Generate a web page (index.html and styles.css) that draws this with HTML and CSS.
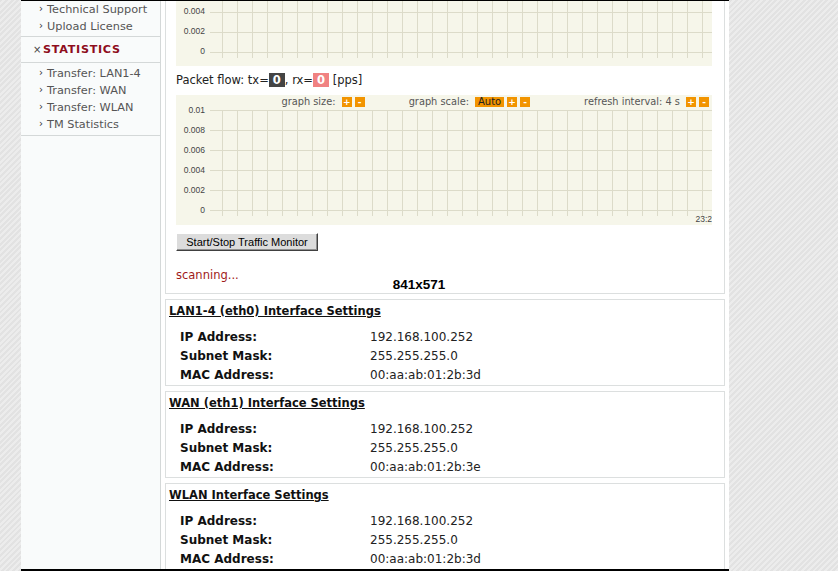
FILE: index.html
```html
<!DOCTYPE html>
<html lang="en">
<head>
    <meta charset="UTF-8">
    <title>Status - Traffic Monitor</title>
    <link rel="stylesheet" href="styles.css">
</head>
<body>

<div class="page">
    <!-- Left menu -->
    <div class="sidebar">
        <ul class="menu menu-top">
            <li>Technical Support</li>
            <li>Upload License</li>
        </ul>
        <div class="menu-head">STATISTICS</div>
        <ul class="menu">
            <li>Transfer: LAN1-4</li>
            <li>Transfer: WAN</li>
            <li>Transfer: WLAN</li>
            <li>TM Statistics</li>
        </ul>
    </div>

    <div class="content">
        <!-- Traffic monitor -->
        <div class="box monitor">
            <div class="graph graph-cut">
                <svg width="536" height="65" viewBox="0 64 536 65">
                    <defs>
                        <pattern id="cols1" x="46" y="0" width="15" height="130" patternUnits="userSpaceOnUse">
                            <path d="M0.5 0V130" stroke="#dcdbc9"/>
                        </pattern>
                    </defs>
                    <rect x="46" y="15" width="481" height="106" fill="url(#cols1)"/>
                    <path d="M34 15.5H536M34 35.5H536M34 55.5H536M34 75.5H536M34 95.5H536M34 115.5H536" stroke="#dcdbc9"/>
                    <g class="axis">
                        <text x="29" y="77">0.004</text>
                        <text x="29" y="97">0.002</text>
                        <text x="29" y="117">0</text>
                    </g>
                </svg>
            </div>

            <p class="flow">Packet flow: tx=<span class="val tx">0</span>, rx=<span class="val rx">0</span> [pps]</p>

            <div class="graph">
                <div class="graph-bar">
                    <span class="ctl">graph size: <b class="btn">+</b><b class="btn">-</b></span>
                    <span class="ctl ctl-scale">graph scale: <b class="btn btn-wide">Auto</b><b class="btn">+</b><b class="btn">-</b></span>
                    <span class="ctl ctl-refresh">refresh interval: 4 s <b class="btn">+</b><b class="btn">-</b></span>
                </div>
                <svg width="536" height="130">
                    <defs>
                        <pattern id="cols2" x="46" y="0" width="15" height="130" patternUnits="userSpaceOnUse">
                            <path d="M0.5 0V130" stroke="#dcdbc9"/>
                        </pattern>
                    </defs>
                    <rect x="46" y="15" width="481" height="106" fill="url(#cols2)"/>
                    <path d="M34 15.5H536M34 35.5H536M34 55.5H536M34 75.5H536M34 95.5H536M34 115.5H536" stroke="#dcdbc9"/>
                    <g class="axis">
                        <text x="29" y="18">0.01</text>
                        <text x="29" y="38">0.008</text>
                        <text x="29" y="58">0.006</text>
                        <text x="29" y="78">0.004</text>
                        <text x="29" y="98">0.002</text>
                        <text x="29" y="118">0</text>
                        <text x="536" y="127">23:2</text>
                    </g>
                </svg>
            </div>

            <button class="btn-monitor">Start/Stop Traffic Monitor</button>

            <div class="status">
                <span class="scan">scanning...</span>
                <span class="dims">841x571</span>
            </div>
        </div>

        <!-- Interfaces -->
        <div class="box">
            <h3>LAN1-4 (eth0) Interface Settings</h3>
            <dl class="info">
                <dt>IP Address:</dt><dd>192.168.100.252</dd>
                <dt>Subnet Mask:</dt><dd>255.255.255.0</dd>
                <dt>MAC Address:</dt><dd>00:aa:ab:01:2b:3d</dd>
            </dl>
        </div>

        <div class="box">
            <h3>WAN (eth1) Interface Settings</h3>
            <dl class="info">
                <dt>IP Address:</dt><dd>192.168.100.252</dd>
                <dt>Subnet Mask:</dt><dd>255.255.255.0</dd>
                <dt>MAC Address:</dt><dd>00:aa:ab:01:2b:3e</dd>
            </dl>
        </div>

        <div class="box">
            <h3>WLAN Interface Settings</h3>
            <dl class="info">
                <dt>IP Address:</dt><dd>192.168.100.252</dd>
                <dt>Subnet Mask:</dt><dd>255.255.255.0</dd>
                <dt>MAC Address:</dt><dd>00:aa:ab:01:2b:3d</dd>
            </dl>
        </div>
    </div>
</div>

</body>
</html>
```

FILE: styles.css
```css
* {
    margin: 0;
    padding: 0;
    box-sizing: border-box;
}

body {
    font-family: "DejaVu Sans", Verdana, sans-serif;
    font-size: 11.5px;
    color: #222;
    background: repeating-linear-gradient(135deg, #e2e2e2 0, #e2e2e2 2px, #ececec 2px, #ececec 4px);
    height: 571px;
    overflow: hidden;
}

.page {
    display: flex;
    width: 708px;
    height: 571px;
    margin-left: 21px;
    background: #fff;
    border-top: 1px solid #000;
    border-bottom: 2px solid #000;
    overflow: hidden;
}

/* left menu */
.sidebar {
    width: 140px;
    flex-shrink: 0;
    background: #f9fbfb;
    border-right: 1px solid #d4d8d8;
}

.menu {
    list-style: none;
    padding: 2px 0 2px;
    border-bottom: 1px solid #d4d8d8;
}

.menu-top {
    padding: 0 0 1px;
}

.menu li {
    line-height: 17px;
    padding-left: 26px;
    color: #555;
    font-size: 11.3px;
    position: relative;
}

.menu li::before {
    content: "\203A";
    position: absolute;
    left: 18px;
    top: -1px;
    font-size: 10px;
    color: #333;
}

.menu-head {
    height: 26px;
    line-height: 25px;
    padding-left: 22px;
    font-weight: bold;
    font-size: 11.2px;
    letter-spacing: 0.7px;
    color: #8e0d1c;
    border-bottom: 1px solid #d4d8d8;
    position: relative;
}

.menu-head::before {
    content: "\00D7";
    position: absolute;
    left: 12px;
    top: 0;
    font-size: 10px;
    font-weight: normal;
    letter-spacing: 0;
    color: #444;
}

/* right column */
.content {
    flex: 1;
    padding: 0 4px;
}

.box {
    border: 1px solid #dcdfdf;
    margin-top: 5px;
    background: #fff;
}

.monitor {
    margin-top: 0;
    border-top: none;
    padding: 0 10px;
    height: 293px;
}

.graph {
    position: relative;
    width: 536px;
    height: 130px;
    background: #f6f6ea;
}

.graph svg {
    display: block;
}

.graph-cut {
    height: 65px;
}

.axis text {
    font-family: "Liberation Sans", Arial, sans-serif;
    font-size: 8.5px;
    fill: #444;
    text-anchor: end;
}

.graph-bar {
    position: absolute;
    top: 2px;
    right: 3px;
    display: flex;
    font-size: 9.8px;
    line-height: 10px;
    color: #555;
}

.ctl {
    display: flex;
    align-items: center;
    white-space: pre;
}

.ctl-scale {
    margin-left: 44px;
}

.ctl-refresh {
    margin-left: 54px;
}

.btn {
    display: inline-block;
    width: 10px;
    height: 10px;
    margin-left: 3px;
    background: #f29400;
    color: #fff;
    font-weight: bold;
    font-size: 9px;
    line-height: 10px;
    text-align: center;
}

.btn-wide {
    width: 29px;
    font-weight: normal;
    font-size: 10px;
    color: #222;
}

.flow {
    padding: 6px 0;
    line-height: 17px;
    font-size: 11.5px;
    color: #222;
}

.val {
    display: inline-block;
    width: 16px;
    line-height: 14px;
    text-align: center;
    font-weight: bold;
    color: #fff;
}

.tx {
    background: #444;
}

.rx {
    background: #f08282;
}

.btn-monitor {
    display: block;
    width: 142px;
    height: 18px;
    margin-top: 8px;
    font-family: "Liberation Sans", Arial, sans-serif;
    font-size: 11px;
    color: #000;
    background: #dcdcdc;
    border: 1px solid;
    border-color: #fff #404040 #404040 #fff;
    box-shadow: inset -1px -1px #909090;
}

.status {
    display: flex;
    margin-top: 17px;
}

.scan {
    line-height: 14px;
    color: #a01a1a;
}

.dims {
    margin-left: 154px;
    padding-top: 9px;
    line-height: 16px;
    font-family: "Liberation Sans", Arial, sans-serif;
    font-weight: bold;
    font-size: 13.5px;
    color: #000;
}

/* interface boxes */
.box h3 {
    padding: 3px 3px 0;
    line-height: 17px;
    font-size: 11.5px;
    text-decoration: underline;
    color: #111;
}

.info {
    display: grid;
    grid-template-columns: 190px 1fr;
    margin-top: 8px;
    padding: 0 0 0 14px;
    line-height: 19px;
    font-size: 12px;
}

.info dt {
    font-weight: bold;
    color: #111;
}

.info dd {
    color: #222;
}
```
